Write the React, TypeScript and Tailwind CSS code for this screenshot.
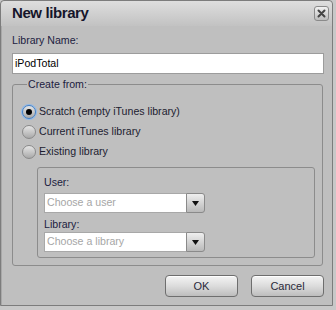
const font = "font-['Liberation_Sans',Arial,sans-serif]";

function Radio({ checked, label }: { checked?: boolean; label: string }) {
  return (
    <label className="flex items-center gap-[3px] h-[20px]">
      <span
        className={
          "w-[14px] h-[14px] rounded-full border flex items-center justify-center bg-gradient-to-b from-[#e6e6e6] to-[#a9a9a9] " +
          (checked ? "border-[#3f7fc8] shadow-[0_0_0_1px_#8fb8e8]" : "border-[#8a8a8a]")
        }
      >
        {checked && <span className="w-[6px] h-[6px] rounded-full bg-black" />}
      </span>
      <span className="text-[10.6px] text-[#1c1c30]">{label}</span>
    </label>
  );
}

function Select({ placeholder }: { placeholder: string }) {
  return (
    <div className="flex w-[161px] h-[20px]">
      <div className="flex-1 bg-white border border-[#a8a8a8] border-r-0 flex items-center px-[2px] text-[10.6px] text-[#a6a6a6]">
        {placeholder}
      </div>
      <div className="w-[19px] rounded-r-[3px] border border-[#8a8a8a] bg-gradient-to-b from-[#efefef] to-[#b9b9b9] flex items-center justify-center">
        <svg width="7" height="5" viewBox="0 0 7 5">
          <path d="M0 0h7L3.5 5z" fill="#111" />
        </svg>
      </div>
    </div>
  );
}

function Button({ label }: { label: string }) {
  return (
    <button className="w-[73px] h-[22px] rounded-[4px] border border-[#6e6e6e] bg-gradient-to-b from-[#f4f4f4] via-[#dcdcdc] to-[#bdbdbd] text-[11px] text-[#2a2a3a] shadow-[inset_0_1px_0_#fff]">
      {label}
    </button>
  );
}

export default function App() {
  return (
    <div className={"w-[336px] h-[310px] bg-[#c8c8c8] " + font}>
      <div className="w-[333px] h-[306px] bg-[#bfbfbf] border border-[#7c7c7c] rounded-t-[4px] flex flex-col shadow-[inset_1px_0_0_#a8a8a8]">
        <div className="h-[25px] flex items-center justify-between pl-[11px] pr-[3px] bg-gradient-to-b from-[#dedede] via-[#d0d0d0] to-[#c2c2c2] rounded-t-[4px]">
          <span className="text-[15px] font-bold text-[#15152a] tracking-[-0.4px]">New library</span>
          <span className="w-[15px] h-[15px] rounded-[3px] border border-[#8a8a8a] bg-gradient-to-b from-[#f2f2f2] to-[#bcbcbc] flex items-center justify-center">
            <svg width="9" height="9" viewBox="0 0 9 9">
              <path d="M1.5 1.5l6 6M7.5 1.5l-6 6" stroke="#444" strokeWidth="2" strokeLinecap="round" />
            </svg>
          </span>
        </div>

        <div className="flex flex-col pl-[11px] pr-[8px]">
          <div className="mt-[7px] h-[14px] text-[10.6px] leading-[14px] text-[#1c1c40]">Library Name:</div>
          <div className="mt-[6px] h-[21px] w-[312px] bg-white border border-[#9c9c9c] flex items-center px-[2px] text-[10.6px] text-black">
            iPodTotal
          </div>

          <fieldset className="mt-[4px] w-[311px] h-[188px] border border-[#8c8c8c] rounded-[3px] pl-[9px] pr-[6px]">
            <legend className="ml-[5px] px-[1px] text-[10.6px] leading-[13px] text-[#1c1c40]">Create from:</legend>
            <div className="mt-[11px] flex flex-col">
              <Radio checked label="Scratch (empty iTunes library)" />
              <Radio label="Current iTunes library" />
              <Radio label="Existing library" />
            </div>
            <div className="mt-[5px] ml-[15px] w-[278px] h-[91px] border border-[#8c8c8c] rounded-[3px] pl-[6px] pt-[7px] flex flex-col">
              <div className="h-[14px] leading-[14px] text-[10.6px] text-[#1c1c40]">User:</div>
              <div className="mt-[4px]">
                <Select placeholder="Choose a user" />
              </div>
              <div className="mt-[4px] h-[14px] leading-[14px] text-[10.6px] text-[#1c1c40]">Library:</div>
              <div className="mt-[1px]">
                <Select placeholder="Choose a library" />
              </div>
            </div>
          </fieldset>

          <div className="mt-[9px] flex justify-end gap-[13px] w-[312px]">
            <Button label="OK" />
            <Button label="Cancel" />
          </div>
        </div>
      </div>
    </div>
  );
}
